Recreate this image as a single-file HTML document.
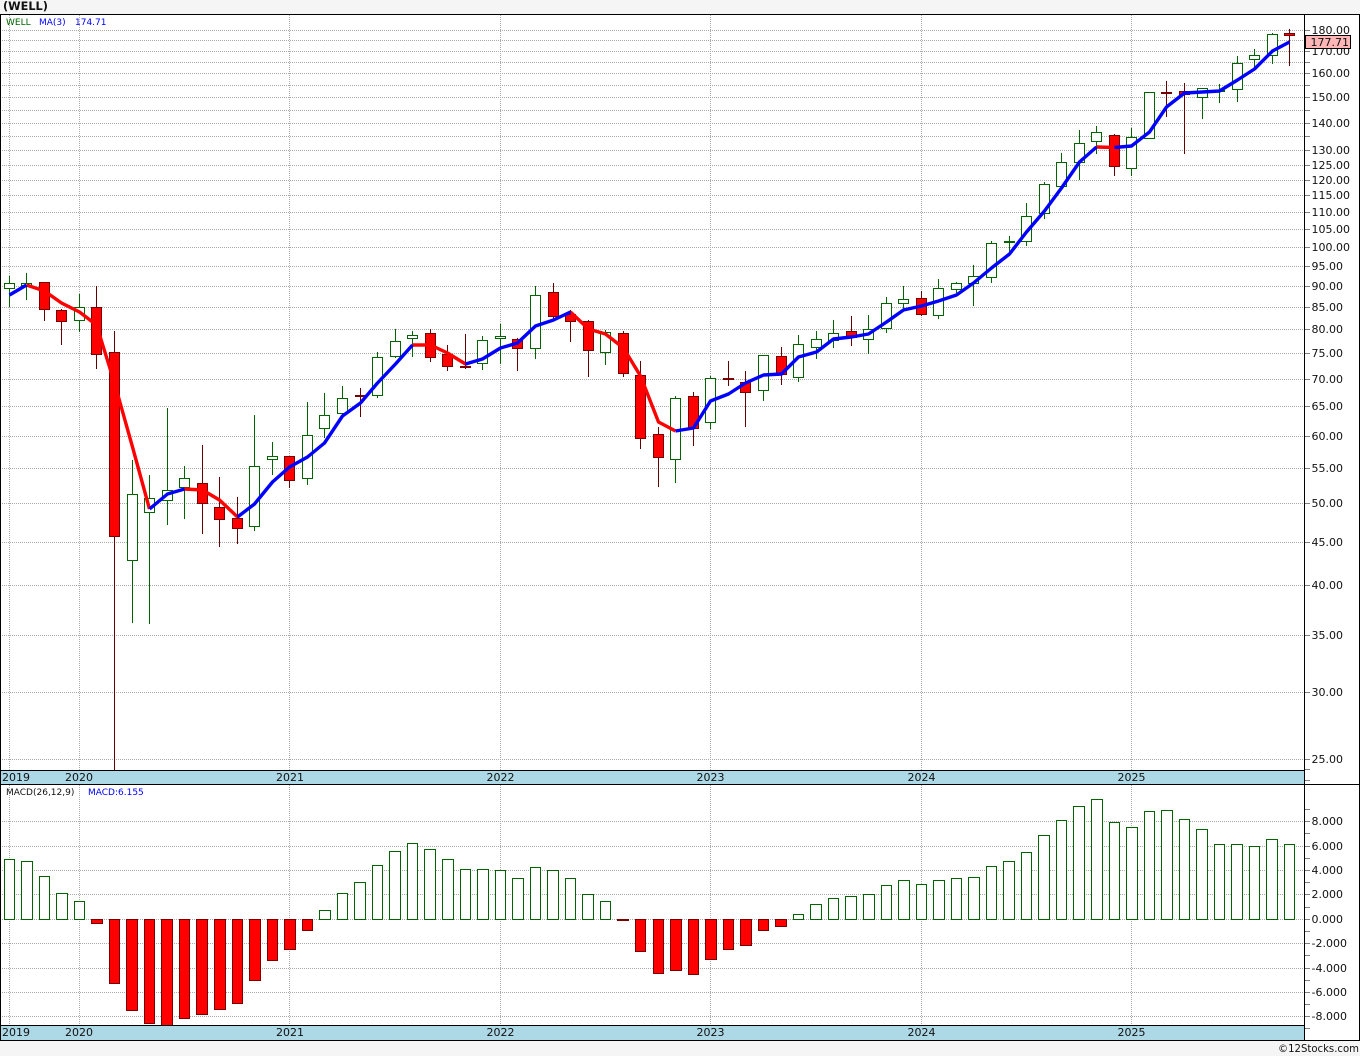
<!DOCTYPE html>
<html>
<head>
<meta charset="utf-8">
<style>
html,body{margin:0;padding:0;background:#f5f5f5;width:1360px;height:1056px;overflow:hidden}
svg{display:block}
text{font-family:"DejaVu Sans","Liberation Sans",sans-serif;font-size:11px;fill:#111}
</style>
</head>
<body>
<svg width="1360" height="1056" viewBox="0 0 1360 1056" xmlns="http://www.w3.org/2000/svg">
<rect x="0" y="0" width="1360" height="1056" fill="#f5f5f5"/>
<rect x="0" y="14" width="1360" height="1026" fill="#fff"/>
<g shape-rendering="crispEdges">
<!-- grid -->
<path fill="none" stroke="#aaa" stroke-width="1" stroke-dasharray="1 1" d="M0 30.5H1304M0 40.5H1304M0 51.5H1304M0 62.5H1304M0 73.5H1304M0 85.5H1304M0 97.5H1304M0 110.5H1304M0 123.5H1304M0 136.5H1304M0 150.5H1304M0 165.5H1304M0 180.5H1304M0 195.5H1304M0 212.5H1304M0 229.5H1304M0 247.5H1304M0 266.5H1304M0 286.5H1304M0 307.5H1304M0 329.5H1304M0 353.5H1304M0 379.5H1304M0 406.5H1304M0 436.5H1304M0 468.5H1304M0 503.5H1304M0 542.5H1304M0 585.5H1304M0 635.5H1304M0 692.5H1304M0 759.5H1304M0 821.5H1304M0 846.5H1304M0 870.5H1304M0 894.5H1304M0 919.5H1304M0 943.5H1304M0 968.5H1304M0 992.5H1304M0 1016.5H1304"/>
<path fill="none" stroke="#aaa" stroke-width="1" stroke-dasharray="1 1" d="M9.5 15V770M79.5 15V770M289.5 15V770M500.5 15V770M710.5 15V770M921.5 15V770M1131.5 15V770M9.5 785V1025M79.5 785V1025M289.5 785V1025M500.5 785V1025M710.5 785V1025M921.5 785V1025M1131.5 785V1025"/>
<!-- ticks -->
<path fill="none" stroke="#808080" stroke-width="1" d="M1305 30.5h5M1305 40.5h5M1305 51.5h5M1305 62.5h5M1305 73.5h5M1305 85.5h5M1305 97.5h5M1305 110.5h5M1305 123.5h5M1305 136.5h5M1305 150.5h5M1305 165.5h5M1305 180.5h5M1305 195.5h5M1305 212.5h5M1305 229.5h5M1305 247.5h5M1305 266.5h5M1305 286.5h5M1305 307.5h5M1305 329.5h5M1305 353.5h5M1305 379.5h5M1305 406.5h5M1305 436.5h5M1305 468.5h5M1305 503.5h5M1305 542.5h5M1305 585.5h5M1305 635.5h5M1305 692.5h5M1305 759.5h5M1305 769.5h5M1305 780.5h5M1305 809.5h5M1305 821.5h5M1305 833.5h5M1305 846.5h5M1305 858.5h5M1305 870.5h5M1305 882.5h5M1305 894.5h5M1305 907.5h5M1305 919.5h5M1305 931.5h5M1305 943.5h5M1305 955.5h5M1305 968.5h5M1305 980.5h5M1305 992.5h5M1305 1004.5h5M1305 1016.5h5M1305 1028.5h5"/>
<!-- green wicks -->
<path fill="none" stroke="#006400" stroke-width="1" d="M9.5 276V307M26.5 273V300M79.5 294V332M132.5 460V623M149.5 475V624M167.5 408V525M184.5 466V519M254.5 415V531M272.5 442V475M307.5 402V485M324.5 393V438M342.5 386V417M377.5 352V398M395.5 329V358M412.5 331V357M482.5 336V370M500.5 324V364M535.5 286V359M605.5 330V365M675.5 396V483M710.5 376V429M763.5 355V401M798.5 335V382M816.5 331V359M833.5 320V348M868.5 315V354M886.5 297V333M903.5 286V310M938.5 279V319M956.5 282V293M973.5 265V306M991.5 241V283M1009.5 236V255M1026.5 203V246M1044.5 182V219M1061.5 153V187M1079.5 130V180M1096.5 126V154M1131.5 128V176M1149.5 92V139M1202.5 88V119M1219.5 84V103M1237.5 56V102M1254.5 49V68M1272.5 33V64"/>
<!-- red wicks -->
<path fill="none" stroke="#660000" stroke-width="1" d="M44.5 282V321M61.5 309V345M96.5 286V369M114.5 331V770M202.5 445V534M219.5 477V547M237.5 497V544M289.5 456V488M360.5 388V417M430.5 329V362M447.5 345V371M465.5 334V369M517.5 338V371M553.5 283V320M570.5 310V342M588.5 320V377M623.5 331V377M640.5 361V449M658.5 427V487M693.5 392V446M728.5 361V386M745.5 371V427M781.5 347V385M851.5 316V346M921.5 291V316M1114.5 134V176M1166.5 81V117M1184.5 83V154M1289.5 29V66"/>
<!-- green bodies -->
<path fill="#fff" stroke="#006400" stroke-width="1" d="M4.5 283.5H14.5V288.5H4.5ZM21.5 283.5H31.5V285.5H21.5ZM74.5 307.5H84.5V320.5H74.5ZM127.5 494.5H137.5V560.5H127.5ZM144.5 498.5H154.5V512.5H144.5ZM162.5 490.5H172.5V500.5H162.5ZM179.5 478.5H189.5V487.5H179.5ZM249.5 466.5H259.5V526.5H249.5ZM267.5 456.5H277.5V459.5H267.5ZM302.5 435.5H312.5V478.5H302.5ZM319.5 415.5H329.5V428.5H319.5ZM337.5 398.5H347.5V413.5H337.5ZM372.5 357.5H382.5V395.5H372.5ZM390.5 341.5H400.5V356.5H390.5ZM407.5 335.5H417.5V338.5H407.5ZM477.5 340.5H487.5V363.5H477.5ZM495.5 336.5H505.5V338.5H495.5ZM530.5 295.5H540.5V348.5H530.5ZM600.5 332.5H610.5V352.5H600.5ZM670.5 398.5H680.5V459.5H670.5ZM705.5 378.5H715.5V422.5H705.5ZM758.5 355.5H768.5V390.5H758.5ZM793.5 344.5H803.5V377.5H793.5ZM811.5 339.5H821.5V347.5H811.5ZM828.5 333.5H838.5V340.5H828.5ZM863.5 329.5H873.5V339.5H863.5ZM881.5 303.5H891.5V328.5H881.5ZM898.5 299.5H908.5V303.5H898.5ZM933.5 288.5H943.5V315.5H933.5ZM951.5 283.5H961.5V289.5H951.5ZM968.5 276.5H978.5V283.5H968.5ZM986.5 243.5H996.5V277.5H986.5ZM1004.5 241.5H1014.5V242.5H1004.5ZM1021.5 216.5H1031.5V241.5H1021.5ZM1039.5 184.5H1049.5V213.5H1039.5ZM1056.5 162.5H1066.5V186.5H1056.5ZM1074.5 143.5H1084.5V162.5H1074.5ZM1091.5 132.5H1101.5V141.5H1091.5ZM1126.5 137.5H1136.5V168.5H1126.5ZM1144.5 92.5H1154.5V138.5H1144.5ZM1197.5 88.5H1207.5V97.5H1197.5ZM1214.5 90.5H1224.5V91.5H1214.5ZM1232.5 63.5H1242.5V89.5H1232.5ZM1249.5 55.5H1259.5V59.5H1249.5ZM1267.5 34.5H1277.5V55.5H1267.5Z"/>
<!-- red bodies -->
<path fill="#ff0000" stroke="#7a0000" stroke-width="1" d="M39.5 282.5H49.5V309.5H39.5ZM56.5 310.5H66.5V321.5H56.5ZM91.5 307.5H101.5V354.5H91.5ZM109.5 352.5H119.5V536.5H109.5ZM197.5 483.5H207.5V503.5H197.5ZM214.5 507.5H224.5V519.5H214.5ZM232.5 518.5H242.5V528.5H232.5ZM284.5 456.5H294.5V480.5H284.5ZM355.5 395.5H365.5V396.5H355.5ZM425.5 333.5H435.5V357.5H425.5ZM442.5 354.5H452.5V366.5H442.5ZM460.5 366.5H470.5V367.5H460.5ZM512.5 339.5H522.5V348.5H512.5ZM548.5 292.5H558.5V316.5H548.5ZM565.5 314.5H575.5V321.5H565.5ZM583.5 321.5H593.5V350.5H583.5ZM618.5 333.5H628.5V373.5H618.5ZM635.5 375.5H645.5V438.5H635.5ZM653.5 434.5H663.5V457.5H653.5ZM688.5 396.5H698.5V428.5H688.5ZM723.5 378.5H733.5V379.5H723.5ZM740.5 382.5H750.5V392.5H740.5ZM776.5 356.5H786.5V374.5H776.5ZM846.5 331.5H856.5V337.5H846.5ZM916.5 298.5H926.5V314.5H916.5ZM1109.5 135.5H1119.5V166.5H1109.5ZM1161.5 92.5H1171.5V93.5H1161.5ZM1179.5 91.5H1189.5V94.5H1179.5ZM1284.5 33.5H1294.5V35.5H1284.5Z"/>
<!-- MACD green -->
<path fill="#fff" stroke="#006400" stroke-width="1" d="M4.5 919.5V859.5H14.5V919.5ZM21.5 919.5V861.5H32.5V919.5ZM39.5 919.5V876.5H49.5V919.5ZM56.5 919.5V893.5H67.5V919.5ZM74.5 919.5V901.5H84.5V919.5ZM319.5 919.5V910.5H330.5V919.5ZM337.5 919.5V893.5H347.5V919.5ZM354.5 919.5V882.5H365.5V919.5ZM372.5 919.5V865.5H382.5V919.5ZM389.5 919.5V851.5H400.5V919.5ZM407.5 919.5V843.5H417.5V919.5ZM424.5 919.5V849.5H435.5V919.5ZM442.5 919.5V859.5H453.5V919.5ZM460.5 919.5V869.5H470.5V919.5ZM477.5 919.5V869.5H488.5V919.5ZM495.5 919.5V870.5H505.5V919.5ZM512.5 919.5V878.5H523.5V919.5ZM530.5 919.5V867.5H540.5V919.5ZM547.5 919.5V870.5H558.5V919.5ZM565.5 919.5V878.5H575.5V919.5ZM582.5 919.5V894.5H593.5V919.5ZM600.5 919.5V901.5H610.5V919.5ZM793.5 919.5V914.5H803.5V919.5ZM810.5 919.5V904.5H821.5V919.5ZM828.5 919.5V898.5H838.5V919.5ZM845.5 919.5V896.5H856.5V919.5ZM863.5 919.5V894.5H874.5V919.5ZM881.5 919.5V885.5H891.5V919.5ZM898.5 919.5V880.5H909.5V919.5ZM916.5 919.5V884.5H926.5V919.5ZM933.5 919.5V880.5H944.5V919.5ZM951.5 919.5V878.5H961.5V919.5ZM968.5 919.5V877.5H979.5V919.5ZM986.5 919.5V866.5H996.5V919.5ZM1003.5 919.5V861.5H1014.5V919.5ZM1021.5 919.5V852.5H1031.5V919.5ZM1038.5 919.5V835.5H1049.5V919.5ZM1056.5 919.5V820.5H1066.5V919.5ZM1073.5 919.5V806.5H1084.5V919.5ZM1091.5 919.5V799.5H1102.5V919.5ZM1109.5 919.5V822.5H1119.5V919.5ZM1126.5 919.5V827.5H1137.5V919.5ZM1144.5 919.5V811.5H1154.5V919.5ZM1161.5 919.5V810.5H1172.5V919.5ZM1179.5 919.5V819.5H1189.5V919.5ZM1196.5 919.5V829.5H1207.5V919.5ZM1214.5 919.5V844.5H1224.5V919.5ZM1231.5 919.5V844.5H1242.5V919.5ZM1249.5 919.5V846.5H1259.5V919.5ZM1266.5 919.5V839.5H1277.5V919.5ZM1284.5 919.5V844.5H1294.5V919.5Z"/>
<!-- MACD red -->
<path fill="#ff0000" stroke="#7a0000" stroke-width="1" d="M91.5 919.5V923.5H102.5V919.5ZM109.5 919.5V983.5H119.5V919.5ZM126.5 919.5V1010.5H137.5V919.5ZM144.5 919.5V1023.5H154.5V919.5ZM161.5 919.5V1025.5H172.5V919.5ZM179.5 919.5V1018.5H189.5V919.5ZM196.5 919.5V1014.5H207.5V919.5ZM214.5 919.5V1009.5H225.5V919.5ZM232.5 919.5V1003.5H242.5V919.5ZM249.5 919.5V980.5H260.5V919.5ZM267.5 919.5V960.5H277.5V919.5ZM284.5 919.5V949.5H295.5V919.5ZM302.5 919.5V930.5H312.5V919.5ZM617.5 919.5V920.5H628.5V919.5ZM635.5 919.5V951.5H645.5V919.5ZM653.5 919.5V973.5H663.5V919.5ZM670.5 919.5V970.5H681.5V919.5ZM688.5 919.5V974.5H698.5V919.5ZM705.5 919.5V959.5H716.5V919.5ZM723.5 919.5V949.5H733.5V919.5ZM740.5 919.5V945.5H751.5V919.5ZM758.5 919.5V930.5H768.5V919.5ZM775.5 919.5V926.5H786.5V919.5Z"/>
</g>
<!-- moving average -->
<g fill="none" stroke-width="3.4" stroke-linejoin="round" stroke-linecap="butt">
<path stroke="#ff0000" d="M26.5 285L44.5 291L61.5 303L79.5 312L96.5 325L114.5 383L132.5 447L149.5 509"/>
<path stroke="#ff0000" d="M184.5 489L202.5 490L219.5 500L237.5 517"/>
<path stroke="#ff0000" d="M412.5 345L430.5 345L447.5 353L465.5 364"/>
<path stroke="#ff0000" d="M570.5 312L588.5 329L605.5 334L623.5 348L640.5 376L658.5 422L675.5 431"/>
<path stroke="#ff0000" d="M1096.5 147L1114.5 147.5"/>
<path stroke="#0000ff" d="M9.5 295L26.5 285"/>
<path stroke="#0000ff" d="M149.5 509L167.5 494L184.5 489"/>
<path stroke="#0000ff" d="M237.5 517L254.5 504L272.5 482L289.5 467L307.5 457L324.5 443L342.5 416L360.5 403L377.5 383L395.5 364L412.5 345"/>
<path stroke="#0000ff" d="M465.5 364L482.5 359L500.5 348L517.5 343L535.5 326L553.5 320L570.5 312"/>
<path stroke="#0000ff" d="M675.5 431L693.5 428L710.5 401L728.5 394L745.5 383L763.5 375L781.5 374L798.5 357L816.5 352L833.5 339L851.5 337L868.5 334L886.5 322L903.5 310L921.5 306L938.5 301L956.5 295L973.5 283L991.5 268L1009.5 254L1026.5 232L1044.5 211L1061.5 188L1079.5 162L1096.5 147"/>
<path stroke="#0000ff" d="M1114.5 147.5L1131.5 146L1149.5 132L1166.5 107L1184.5 93L1202.5 92L1219.5 91L1237.5 80L1254.5 69L1272.5 51L1289.5 42"/>
</g>
<g shape-rendering="crispEdges">
<!-- date bands -->
<rect x="0" y="770" width="1304" height="14" fill="#add8e6"/>
<rect x="0" y="1025" width="1304" height="15" fill="#add8e6"/>
<!-- frame lines -->
<path fill="none" stroke="#000" stroke-width="1" d="M0 14.5H1360M0 770.5H1304M0 784.5H1360M0 1025.5H1304M0 1040.5H1360M0.5 14V1040M1304.5 14V1040M1359.5 14V1040"/>
</g>
<!-- title & legends -->
<text x="3" y="10" style="font-weight:bold;font-size:11.3px" fill="#000">(WELL)</text>
<text x="6" y="25" style="font-size:9px;fill:#006400">WELL</text>
<text x="39" y="25" style="font-size:9px;fill:#0000ff">MA(3)</text>
<text x="75" y="25" style="font-size:9px;fill:#0000ff">174.71</text>
<text x="6" y="795" style="font-size:9px;fill:#111">MACD(26,12,9)</text>
<text x="88" y="795" style="font-size:9px;fill:#0000ff">MACD:6.155</text>
<!-- date labels -->
<text x="2" y="781">2019</text><text x="65" y="781">2020</text><text x="276" y="781">2021</text><text x="486.5" y="781">2022</text><text x="696.5" y="781">2023</text><text x="907.5" y="781">2024</text><text x="1117.5" y="781">2025</text>
<text x="2" y="1036">2019</text><text x="65" y="1036">2020</text><text x="276" y="1036">2021</text><text x="486.5" y="1036">2022</text><text x="696.5" y="1036">2023</text><text x="907.5" y="1036">2024</text><text x="1117.5" y="1036">2025</text>
<!-- price labels -->
<text x="1311.5" y="34">180.00</text>
<text x="1311.5" y="55">170.00</text>
<text x="1311.5" y="77">160.00</text>
<text x="1311.5" y="101">150.00</text>
<text x="1311.5" y="127">140.00</text>
<text x="1311.5" y="154">130.00</text>
<text x="1311.5" y="169">125.00</text>
<text x="1311.5" y="184">120.00</text>
<text x="1311.5" y="199">115.00</text>
<text x="1311.5" y="216">110.00</text>
<text x="1311.5" y="233">105.00</text>
<text x="1311.5" y="251">100.00</text>
<text x="1311.5" y="270">95.00</text>
<text x="1311.5" y="290">90.00</text>
<text x="1311.5" y="311">85.00</text>
<text x="1311.5" y="333">80.00</text>
<text x="1311.5" y="357">75.00</text>
<text x="1311.5" y="383">70.00</text>
<text x="1311.5" y="410">65.00</text>
<text x="1311.5" y="440">60.00</text>
<text x="1311.5" y="472">55.00</text>
<text x="1311.5" y="507">50.00</text>
<text x="1311.5" y="546">45.00</text>
<text x="1311.5" y="589">40.00</text>
<text x="1311.5" y="639">35.00</text>
<text x="1311.5" y="696">30.00</text>
<text x="1311.5" y="763">25.00</text>
<!-- current price box -->
<rect x="1305.5" y="35.5" width="45" height="13" fill="#ffb6b6" stroke="#000" stroke-width="1" shape-rendering="crispEdges"/>
<text x="1310.5" y="46">177.71</text>
<!-- MACD labels -->
<text x="1311.5" y="825">8.000</text>
<text x="1311.5" y="850">6.000</text>
<text x="1311.5" y="874">4.000</text>
<text x="1311.5" y="898">2.000</text>
<text x="1311.5" y="923">0.000</text>
<text x="1311.5" y="947">-2.000</text>
<text x="1311.5" y="972">-4.000</text>
<text x="1311.5" y="996">-6.000</text>
<text x="1311.5" y="1020">-8.000</text>
<!-- copyright -->
<text x="1278" y="1052" textLength="81" lengthAdjust="spacingAndGlyphs" fill="#000">©12Stocks.com</text>
</svg>
</body>
</html>
